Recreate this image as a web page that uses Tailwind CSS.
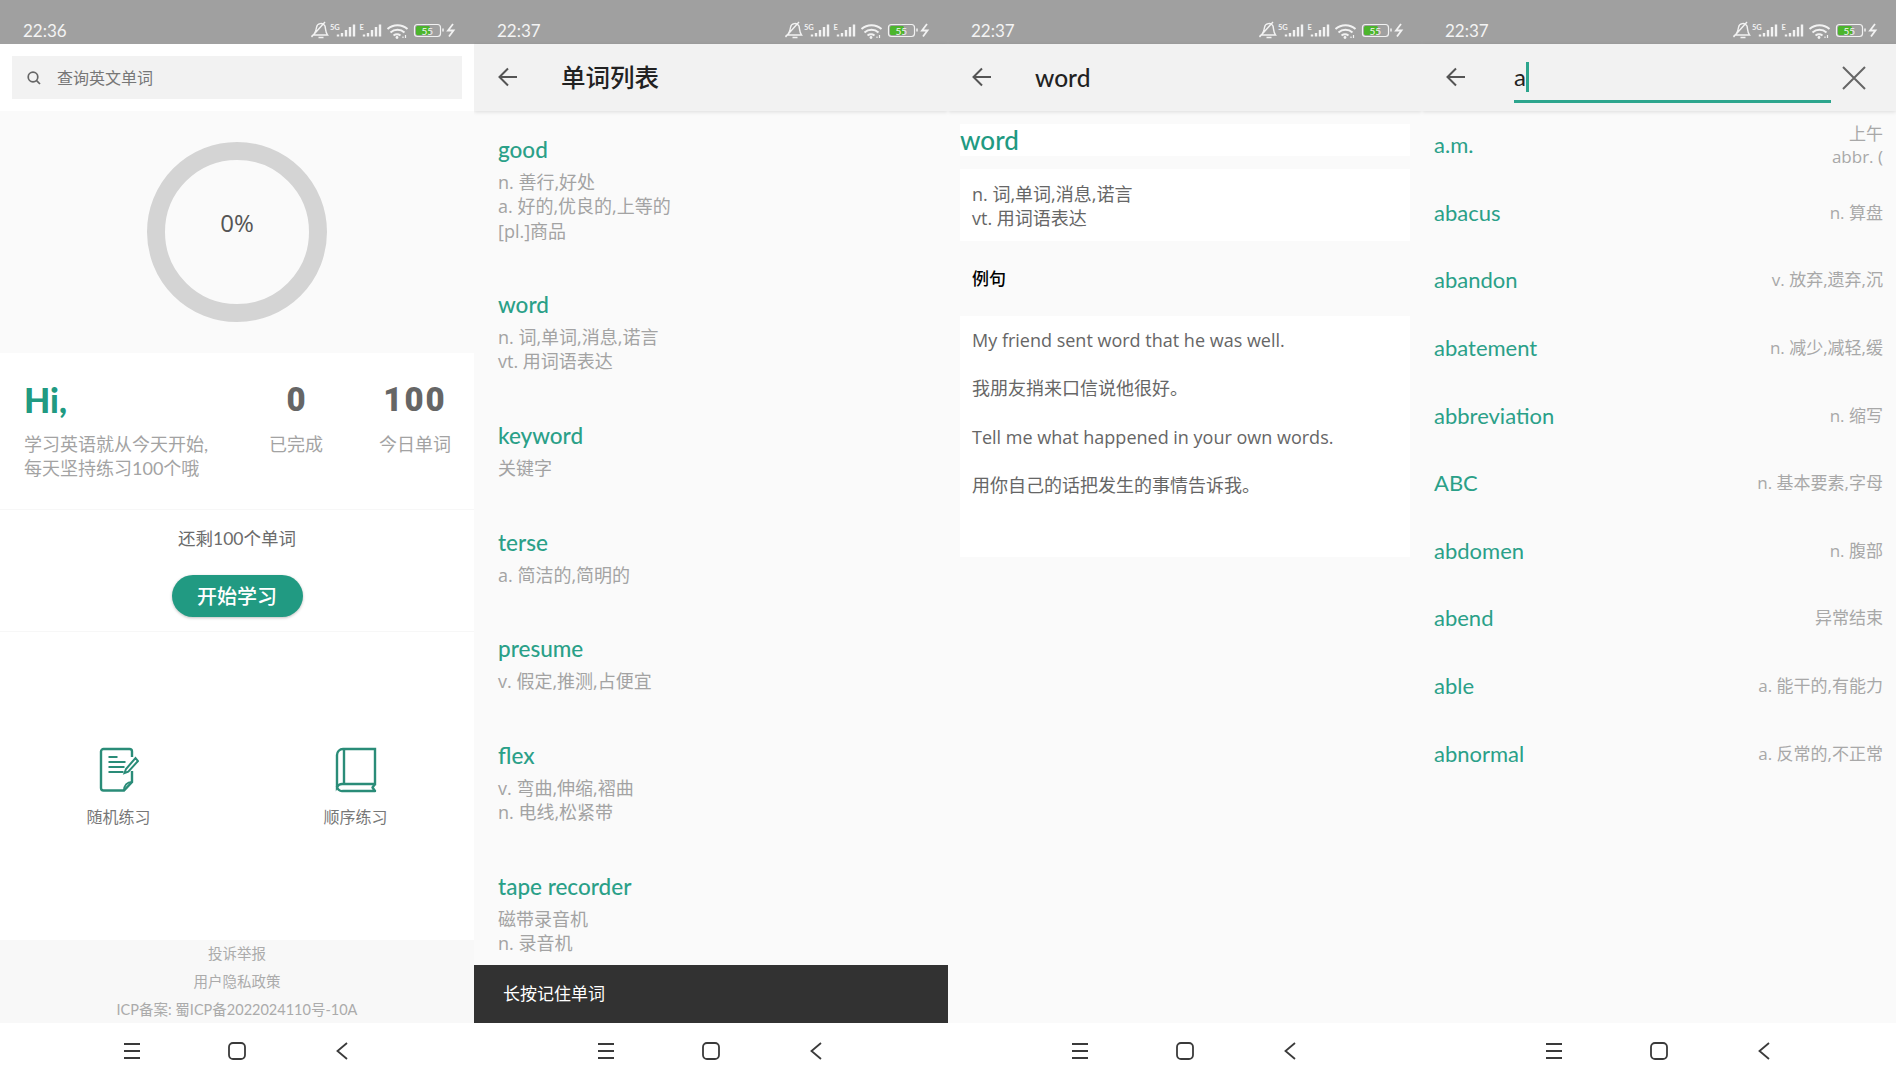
<!DOCTYPE html>
<html lang="en">
<head>
    <meta charset="UTF-8">
    <meta name="viewport" content="width=device-width, initial-scale=1.0">
    <title>单词</title>
    <script src="https://cdn.jsdelivr.net/npm/@tailwindcss/browser@4"></script>
</head>
<body class="bg-white overflow-hidden font-['Lato','Noto_Sans_CJK_SC',sans-serif]">
    <div class="flex w-[1896px] h-[1080px]">

        <!-- home -->
        <section class="w-[474px] h-full overflow-hidden flex flex-col bg-white">
            <div data-status="22:36"></div>
            <div class="h-[67px] px-3 pt-3">
                <div class="h-[43px] bg-[#f2f2f2] flex items-center pl-[15px] gap-[16px] text-[16px] text-[#777]">
                    <svg class="w-[14px] h-[14px]" viewBox="0 0 14 14" fill="none" stroke="#666" stroke-width="1.7"><circle cx="6" cy="6" r="4.8"/><path d="M9.6 9.6 13 13"/></svg>
                    <span>查询英文单词</span>
                </div>
            </div>
            <div class="h-[242px] bg-[#fafafa] flex justify-center pt-[31px]">
                <div class="relative w-[180px] h-[180px] rounded-full border-[18px] border-[#d4d4d4]">
                    <div class="absolute inset-x-0 top-[48px] text-center text-[24px] leading-[30px] text-[#555] font-['Open_Sans',sans-serif]">0%</div>
                </div>
            </div>
            <div class="h-[157px] flex pl-[24px] pt-[27px] border-b border-[#f7f7f7]">
                <div class="w-[215px]">
                    <div class="text-[34px] leading-[40px] font-black text-[#219a82]">Hi,</div>
                    <div class="mt-[12px] text-[18px] leading-[24px] text-[#a3a3a3] whitespace-nowrap">学习英语就从今天开始,<br>每天坚持练习100个哦</div>
                </div>
                <div class="w-[88px] ml-[13px] text-center">
                    <div class="text-[33px] leading-[40px] font-black font-['Roboto',sans-serif] text-[#666]">0</div>
                    <div class="mt-[12px] text-[18px] leading-[24px] text-[#a3a3a3]">已完成</div>
                </div>
                <div class="w-[100px] ml-[25px] text-center">
                    <div class="text-[33px] leading-[40px] font-black font-['Roboto',sans-serif] text-[#666] tracking-[2px]">100</div>
                    <div class="mt-[12px] text-[18px] leading-[24px] text-[#a3a3a3] whitespace-nowrap">今日单词</div>
                </div>
            </div>
            <div class="h-[122px] flex flex-col items-center border-b border-[#f7f7f7]">
                <div class="mt-[16px] text-[17.500px] leading-[26px] text-[#6b6b6b]">还剩100个单词</div>
                <div class="mt-[23px] w-[131px] h-[42px] rounded-full bg-[#219a82] shadow-[0_1px_3px_rgba(0,0,0,0.25)] flex items-center justify-center text-[20px] font-medium text-white">开始学习</div>
            </div>
            <div class="flex-1 flex pt-[115px]">
                <div class="w-[237px] flex flex-col items-center">
                    <svg class="w-[40px] h-[46px]" viewBox="0 0 40 46" fill="none" stroke="#2a8c78" stroke-width="2.4">
                        <path d="M33 10V4.5A2.5 2.5 0 0 0 30.500 2H4.5A2.5 2.5 0 0 0 2 4.5V41A2.500 2.500 0 0 0 4.5 43.500H25L33 35V24"/>
                        <path d="M25 43.500c0-5 3-8.500 8-8.500" stroke-width="2"/>
                        <path d="M9.500 10h9M9.500 15h17M9.500 20h16M9.500 25h15" stroke-width="2.200"/>
                        <path d="M27 22l-1.500 4 3.800-1.300L39 14l-2.500-3z" stroke-width="2"/>
                    </svg>
                    <div class="mt-[12px] text-[16px] leading-[24px] text-[#777]">随机练习</div>
                </div>
                <div class="w-[237px] flex flex-col items-center">
                    <svg class="w-[42px] h-[46px]" viewBox="0 0 42 46" fill="none" stroke="#2a8c78" stroke-width="2.400">
                        <path d="M8 2H40V37H8A6 6 0 0 0 2 40V8A6 6 0 0 1 8 2Z"/>
                        <path d="M9 2V37"/>
                        <path d="M2 39A5 5 0 0 0 8 44H40L37.500 40.500 40 37" stroke-linejoin="round"/>
                    </svg>
                    <div class="mt-[12px] text-[16px] leading-[24px] text-[#777]">顺序练习</div>
                </div>
            </div>
            <div class="h-[83px] bg-[#f8f8f8] flex flex-col items-center text-[14.500px] leading-[28px] text-[#ababab]">
                <div>投诉举报</div>
                <div>用户隐私政策</div>
                <div>ICP备案: 蜀ICP备2022024110号-10A</div>
            </div>
            <div data-nav></div>
        </section>

        <!-- word list -->
        <section class="w-[474px] h-full overflow-hidden flex flex-col bg-[#fafafa]">
            <div data-status="22:37"></div>
            <div data-header="单词列表"></div>
            <div id="wordList" class="flex-1 overflow-hidden"></div>
            <div class="h-[58px] bg-[#323232] flex items-center px-[29px] text-[17px] text-white">长按记住单词</div>
            <div data-nav></div>
        </section>

        <!-- word detail -->
        <section class="w-[474px] h-full overflow-hidden flex flex-col bg-[#fafafa]">
            <div data-status="22:37"></div>
            <div data-header="word"></div>
            <div class="flex-1 px-3 pt-[13px]">
                <div class="h-[32px] bg-white text-[26px] leading-[32px] font-medium text-[#219a82]">word</div>
                <div class="mt-[13px] h-[72px] bg-white px-3 pt-[13px] text-[18px] leading-[24px] text-[#666] font-['Open_Sans','Noto_Sans_CJK_SC',sans-serif]">n. 词,单词,消息,诺言<br>vt. 用词语表达</div>
                <div class="h-[75px] flex items-center px-3 text-[17px] font-medium text-black">例句</div>
                <div class="h-[241px] bg-white px-3 text-[18px] leading-[48.300px] text-[#666] font-['Open_Sans','Noto_Sans_CJK_SC',sans-serif]">
                    <div>My friend sent word that he was well.</div>
                    <div>我朋友捎来口信说他很好。</div>
                    <div>Tell me what happened in your own words.</div>
                    <div>用你自己的话把发生的事情告诉我。</div>
                </div>
            </div>
            <div data-nav></div>
        </section>

        <!-- search -->
        <section class="w-[474px] h-full overflow-hidden flex flex-col bg-[#fafafa]">
            <div data-status="22:37"></div>
            <div class="relative z-10 h-[67px] bg-[#f2f2f2] shadow-[0_1px_4px_rgba(0,0,0,0.12)] flex">
                <div data-back class="w-[92px]"></div>
                <div class="w-[317px] h-[59px] pt-[9px] border-b-[3px] border-[#2ca58d] flex items-center text-[24px] text-[#222]">
                    <span>a</span><span class="w-[3px] h-[30px] bg-[#2ca58d]"></span>
                </div>
                <svg class="ml-[11px] mt-[22px] w-[24px] h-[24px]" viewBox="0 0 24 24" fill="none" stroke="#666" stroke-width="2"><path d="M1 1 23 23M23 1 1 23"/></svg>
            </div>
            <div id="searchList" class="flex-1 overflow-hidden"></div>
            <div data-nav></div>
        </section>
    </div>

    <script>
        const words = [
            ['good', ['n. 善行,好处', 'a. 好的,优良的,上等的', '[pl.]商品']],
            ['word', ['n. 词,单词,消息,诺言', 'vt. 用词语表达']],
            ['keyword', ['关键字']],
            ['terse', ['a. 简洁的,简明的']],
            ['presume', ['v. 假定,推测,占便宜']],
            ['flex', ['v. 弯曲,伸缩,褶曲', 'n. 电线,松紧带']],
            ['tape recorder', ['磁带录音机', 'n. 录音机']]
        ];
        const results = [
            ['a.m.', '上午<br>abbr. ('],
            ['abacus', 'n. 算盘'],
            ['abandon', 'v. 放弃,遗弃,沉'],
            ['abatement', 'n. 减少,减轻,缓'],
            ['abbreviation', 'n. 缩写'],
            ['ABC', 'n. 基本要素,字母'],
            ['abdomen', 'n. 腹部'],
            ['abend', '异常结束'],
            ['able', 'a. 能干的,有能力'],
            ['abnormal', 'a. 反常的,不正常']
        ];

        const backIcon = `<svg class="ml-[24px] mt-[23px] w-[20px] h-[20px]" viewBox="0 0 20 20" fill="none" stroke="#555" stroke-width="2"><path d="M19 10H2M10 1.500 1.500 10 10 18.500"/></svg>`;

        const statusBar = time => `
            <div class="h-[44px] bg-[#a0a0a0] flex items-end justify-between pl-[23px] pr-[18px] pb-[1px] text-white">
                <span class="text-[17px] leading-[25px] text-[#f4f4f4]">${time}</span>
                <svg class="w-[146px] h-[22px] mb-[1px]" viewBox="310 20 146 22" fill="none" stroke="#f2f2f2">
                    <path d="M313 35c2.500-2 3-4.500 3.500-7.500a4.500 4.500 0 0 1 8.500-1.500c.8 3.500.5 6.500 2.500 9zM318.500 37.500h5M311.500 37 325 22" stroke-width="1.400"/>
                    <text x="330" y="29.500" font-size="7.500" font-weight="700" fill="#f2f2f2" stroke="none">5G</text>
                    <path d="M338 36.500v-2M342 36.500v-3.500M346 36.500v-6.500M350 36.500v-9.500M354 36.500v-12" stroke-width="2.400"/>
                    <text x="359.500" y="29.500" font-size="7.500" font-weight="700" fill="#f2f2f2" stroke="none">E</text>
                    <path d="M364 36.500v-2M368 36.500v-3.500M372 36.500v-6.500M376 36.500v-9.500M380 36.500v-12" stroke-width="2.400"/>
                    <path d="M387.500 29a15 15 0 0 1 20 0M390.500 32.500a10.500 10.500 0 0 1 14 0M393.500 35.500a6 6 0 0 1 7 0" stroke-width="2"/>
                    <circle cx="397" cy="37.500" r="1.400" fill="#f2f2f2" stroke="none"/>
                    <path d="M403 38v-1.500M405.500 38v-3" stroke-width="1.200"/>
                    <rect x="414.500" y="24.500" width="26" height="12" rx="3" stroke-width="1.200"/>
                    <rect x="416" y="26" width="14" height="9" rx="1.500" fill="#4cb52c" stroke="none"/>
                    <text x="421.500" y="34.500" font-size="10" fill="#f4f4f4" stroke="none">55</text>
                    <path d="M443 28.500v3" stroke-width="1.500"/>
                    <path d="M453 24 448 30.500h5.500L449 36.500" stroke-width="1.800"/>
                </svg>
            </div>`;

        const navBar = `
            <div class="h-[57px] bg-white flex justify-center items-center pb-[1px]">
                <div class="w-[105px] flex justify-center"><svg class="w-[18px] h-[18px]" viewBox="0 0 18 18" stroke="#3a3a3a" stroke-width="1.800"><path d="M1 2h16M1 9h16M1 16h16"/></svg></div>
                <div class="w-[105px] flex justify-center"><svg class="w-[18px] h-[18px]" viewBox="0 0 18 18" fill="none" stroke="#3a3a3a" stroke-width="1.800"><rect x="1" y="1" width="16" height="16" rx="4"/></svg></div>
                <div class="w-[105px] flex justify-center"><svg class="w-[12px] h-[18px]" viewBox="0 0 12 18" fill="none" stroke="#3a3a3a" stroke-width="1.800"><path d="M11 1 1.500 9 11 17"/></svg></div>
            </div>`;

        document.querySelectorAll('[data-status]').forEach(el => { el.outerHTML = statusBar(el.dataset.status); });
        document.querySelectorAll('[data-nav]').forEach(el => { el.outerHTML = navBar; });
        document.querySelectorAll('[data-back]').forEach(el => { el.innerHTML = backIcon; });
        document.querySelectorAll('[data-header]').forEach(el => {
            el.outerHTML = `
                <div class="relative z-10 h-[67px] bg-[#f2f2f2] shadow-[0_1px_4px_rgba(0,0,0,0.12)] flex">
                    <div class="w-[87px]">${backIcon}</div>
                    <div class="text-[24.500px] leading-[67px] font-medium text-[#222]">${el.dataset.header}</div>
                </div>`;
        });

        document.getElementById('wordList').innerHTML = words.map(([word, defs]) => `
            <div class="px-[24px] pt-[24px] pb-[23.300px]">
                <div class="text-[22.500px] leading-[30px] font-medium text-[#2aa088]">${word}</div>
                <div class="mt-[5px] text-[18px] leading-[24.300px] text-[#a3a3a3] font-['Open_Sans','Noto_Sans_CJK_SC',sans-serif]">${defs.join('<br>')}</div>
            </div>`).join('');

        document.getElementById('searchList').innerHTML = results.map(([word, def]) => `
            <div class="h-[67.600px] flex items-center justify-between pl-3 pr-[13px]">
                <div class="text-[22px] text-[#2aa088]">${word}</div>
                <div class="text-right text-[17px] leading-[23px] text-[#a8a8a8] font-['Open_Sans','Noto_Sans_CJK_SC',sans-serif]">${def}</div>
            </div>`).join('');
    </script>
</body>
</html>
